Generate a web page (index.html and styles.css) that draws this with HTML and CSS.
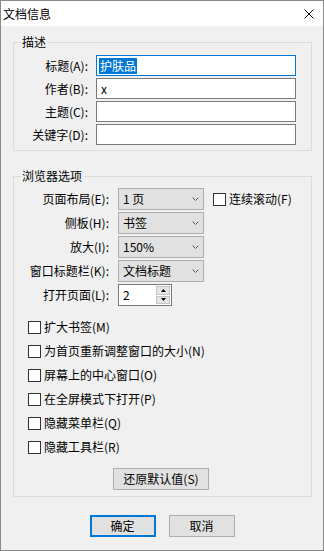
FILE: index.html
```html
<!DOCTYPE html>
<html lang="zh-CN">

<head>
    <meta charset="UTF-8">
    <meta name="viewport" content="width=device-width, initial-scale=1.0">
    <title>文档信息</title>
    <link rel="stylesheet" href="styles.css">
</head>

<body>
    <div class="window">
        <div class="titlebar">
            <span class="title">文档信息</span>
            <svg class="close" width="10" height="10" viewBox="0 0 10 10">
                <path d="M0.5 0.5 L9.5 9.5 M9.5 0.5 L0.5 9.5" stroke="#000" stroke-width="1" fill="none" />
            </svg>
        </div>

        <!-- Description -->
        <fieldset class="group group-desc">
            <legend>描述</legend>
            <div class="rows">
                <div class="row">
                    <label class="lbl">标题(A):</label>
                    <div class="textbox focused"><span class="selected">护肤品</span></div>
                </div>
                <div class="row">
                    <label class="lbl">作者(B):</label>
                    <div class="textbox">x</div>
                </div>
                <div class="row">
                    <label class="lbl">主题(C):</label>
                    <div class="textbox"></div>
                </div>
                <div class="row">
                    <label class="lbl">关键字(D):</label>
                    <div class="textbox"></div>
                </div>
            </div>
        </fieldset>

        <!-- Browser options -->
        <fieldset class="group group-browser">
            <legend>浏览器选项</legend>
            <div class="rows wide">
                <div class="row">
                    <label class="lbl">页面布局(E):</label>
                    <div class="select"><span>1 页</span><svg class="chev" width="7" height="4" viewBox="0 0 7 4"><path d="M0.5 0.5 L3.5 3.5 L6.5 0.5" stroke="#555" fill="none" /></svg></div>
                    <label class="check inline"><span class="box"></span>连续滚动(F)</label>
                </div>
                <div class="row">
                    <label class="lbl">侧板(H):</label>
                    <div class="select"><span>书签</span><svg class="chev" width="7" height="4" viewBox="0 0 7 4"><path d="M0.5 0.5 L3.5 3.5 L6.5 0.5" stroke="#555" fill="none" /></svg></div>
                </div>
                <div class="row">
                    <label class="lbl">放大(I):</label>
                    <div class="select"><span>150%</span><svg class="chev" width="7" height="4" viewBox="0 0 7 4"><path d="M0.5 0.5 L3.5 3.5 L6.5 0.5" stroke="#555" fill="none" /></svg></div>
                </div>
                <div class="row">
                    <label class="lbl">窗口标题栏(K):</label>
                    <div class="select"><span>文档标题</span><svg class="chev" width="7" height="4" viewBox="0 0 7 4"><path d="M0.5 0.5 L3.5 3.5 L6.5 0.5" stroke="#555" fill="none" /></svg></div>
                </div>
                <div class="row">
                    <label class="lbl">打开页面(L):</label>
                    <div class="spin">
                        <span class="spin-value">2</span>
                        <div class="spin-buttons">
                            <span class="spin-btn"><svg width="5" height="3" viewBox="0 0 5 3"><path d="M2.5 0 L5 3 L0 3 Z" fill="#000" /></svg></span>
                            <span class="spin-btn"><svg width="5" height="3" viewBox="0 0 5 3"><path d="M0 0 L5 0 L2.5 3 Z" fill="#000" /></svg></span>
                        </div>
                    </div>
                </div>
            </div>

            <div class="checks">
                <label class="check"><span class="box"></span>扩大书签(M)</label>
                <label class="check"><span class="box"></span>为首页重新调整窗口的大小(N)</label>
                <label class="check"><span class="box"></span>屏幕上的中心窗口(O)</label>
                <label class="check"><span class="box"></span>在全屏模式下打开(P)</label>
                <label class="check"><span class="box"></span>隐藏菜单栏(Q)</label>
                <label class="check"><span class="box"></span>隐藏工具栏(R)</label>
            </div>

            <div class="restore">
                <button class="btn btn-restore">还原默认值(S)</button>
            </div>
        </fieldset>

        <div class="footer">
            <button class="btn btn-default">确定</button>
            <button class="btn">取消</button>
        </div>
    </div>
</body>

</html>
```

FILE: styles.css
```css
body {
    margin: 0;
    font-family: "Noto Sans CJK SC", "Noto Sans", sans-serif;
    font-size: 12px;
    line-height: 14px;
    color: #000;
    background-color: #fff;
}

.window {
    width: 324px;
    height: 551px;
    box-sizing: border-box;
    border: 1px solid #8a8a8a;
    background-color: #f0f0f0;
    display: flex;
    flex-direction: column;
}

.titlebar {
    height: 25px;
    flex-shrink: 0;
    background-color: #fff;
    display: flex;
    align-items: center;
    justify-content: space-between;
    padding: 0 9px 0 2px;
}

.title {
    font-size: 12px;
}

.close {
    display: block;
}

/* group boxes */
.group {
    margin: 0 11px 0 12px;
    padding: 6px 0 5px 0;
    border: 1px solid #dcdcdc;
    min-width: 0;
}

.group legend {
    margin-left: 7px;
    padding: 0 2px 0 1px;
    line-height: 14px;
}

.group-desc {
    margin-top: 9px;
}

.group-browser {
    margin-top: 18px;
    padding-top: 5px;
    padding-bottom: 6px;
}

.rows {
    display: flex;
    flex-direction: column;
    gap: 2px;
}

.row {
    display: flex;
    align-items: center;
    height: 21px;
}

.wide .row {
    height: 22px;
}

.lbl {
    width: 74px;
    margin-right: 8px;
    text-align: right;
    white-space: nowrap;
}

.wide .lbl {
    width: 95px;
    margin-right: 9px;
}

.textbox {
    width: 200px;
    height: 21px;
    box-sizing: border-box;
    border: 1px solid #7a7a7a;
    background-color: #fff;
    padding: 0 2px 0 4px;
    display: flex;
    align-items: center;
}

.textbox.focused {
    border-color: #0078d7;
    padding-left: 2px;
}

.selected {
    background-color: #0078d7;
    color: #fff;
    line-height: 16px;
    padding: 0 1px;
}

.select {
    width: 86px;
    height: 22px;
    box-sizing: border-box;
    border: 1px solid #adadad;
    background-color: #e1e1e1;
    display: flex;
    align-items: center;
    justify-content: space-between;
    padding: 0 4px 0 4px;
}

.chev {
    display: block;
}

/* spin box */
.spin {
    width: 54px;
    height: 22px;
    box-sizing: border-box;
    border: 1px solid #7a7a7a;
    background-color: #fff;
    display: flex;
    align-items: center;
    justify-content: space-between;
    padding: 1px 1px 1px 4px;
}

.spin-buttons {
    width: 14px;
    height: 18px;
    display: flex;
    flex-direction: column;
    gap: 1px;
}

.spin-btn {
    flex: 1;
    background-color: #e5e5e5;
    border: 1px solid #c4c4c4;
    display: flex;
    align-items: center;
    justify-content: center;
}

.spin-btn svg {
    display: block;
}

/* check boxes */
.checks {
    margin-top: 13px;
    padding-left: 14px;
    display: flex;
    flex-direction: column;
    gap: 8px;
}

.check {
    display: flex;
    align-items: center;
    height: 16px;
    white-space: nowrap;
}

.check.inline {
    margin-left: 9px;
}

.box {
    width: 13px;
    height: 13px;
    box-sizing: border-box;
    border: 1px solid #333;
    background-color: #fff;
    margin-right: 3px;
    flex-shrink: 0;
}

/* buttons */
.btn {
    font-family: inherit;
    font-size: 12px;
    line-height: 14px;
    color: #000;
    height: 22px;
    width: 66px;
    box-sizing: border-box;
    padding: 0;
    border: 1px solid #adadad;
    background-color: #e1e1e1;
}

.btn-default {
    border-color: #0078d7;
    box-shadow: inset 0 0 0 1px #0078d7;
}

.restore {
    margin-top: 13px;
    display: flex;
    justify-content: center;
}

.btn-restore {
    width: 96px;
    margin-right: 3px;
}

.footer {
    margin-top: 18px;
    display: flex;
    justify-content: center;
    gap: 13px;
}
```
